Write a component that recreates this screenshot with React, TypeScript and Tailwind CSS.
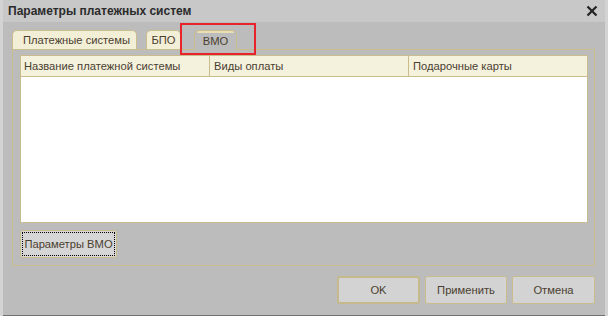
import React from "react";

const F = { fontFamily: '"Liberation Sans", Arial, sans-serif' };

export default function App() {
  return (
    <div
      className="relative w-[608px] h-[316px] bg-[#bcbcbc] border-l-[3px] border-r-[3px] border-[#d3d3d3] flex flex-col text-[11.2px] text-[#4a4030] whitespace-nowrap overflow-hidden"
      style={F}
    >
      {/* title bar */}
      <div className="h-[22px] bg-[#c8c8c8] flex items-center justify-between pl-[5px] pr-[5px] shrink-0">
        <span className="font-bold text-[12px] text-[#2b2b2b]">Параметры платежных систем</span>
        <svg width="12" height="12" viewBox="0 0 12 12" className="mr-[2px]">
          <path d="M1.5 1.5 L10.5 10.5 M10.5 1.5 L1.5 10.5" stroke="#222" strokeWidth="2.2" />
        </svg>
      </div>

      {/* tabs */}
      <div className="flex items-end h-[19px] mt-[8px] ml-[9px] shrink-0">
        <div className="h-[19px] w-[125px] bg-[#f3efd7] border border-b-0 border-[#c9bd8e] rounded-t-[5px] flex items-center pl-[10px] pt-[1px] text-[#4a4030]">
          Платежные системы
        </div>
        <div className="h-[19px] w-[35px] ml-[9px] bg-[#f3efd7] border border-b-0 border-[#c9bd8e] rounded-t-[5px] flex items-center justify-center pt-[1px]">
          БПО
        </div>
        <div className="relative h-[20px] w-[43px] ml-[13px] -mb-px z-10 bg-[#bcbcbc] border border-b-0 border-[#c9bd8e] rounded-t-[5px] flex items-center justify-center pt-[1px]">
          <div className="absolute left-[2px] right-[2px] top-0 h-[2px] bg-[#e9dfb2] rounded-t-[4px]" />
          ВМО
        </div>
      </div>

      {/* tab panel */}
      <div className="ml-[9px] mr-[10px] h-[217px] border border-[#c9bd8e] flex flex-col pl-[7px] pr-[6px] pt-[5px] shrink-0">
        <div className="h-[168px] bg-white border border-[#c9bd8e] flex flex-col">
          <div className="h-[21px] bg-[#f4f1dd] border-b border-[#c9bd8e] flex items-center text-[#4a4030]">
            <div className="w-[189px] h-full border-r border-[#c9bd8e] flex items-center pl-[3px]">Название платежной системы</div>
            <div className="w-[199px] h-full border-r border-[#c9bd8e] flex items-center pl-[4px]">Виды оплаты</div>
            <div className="flex-1 h-full flex items-center pl-[4px]">Подарочные карты</div>
          </div>
        </div>
        <div className="mt-[7px] w-[97px] h-[28px] bg-[#d6d6d6] border border-[#c9bd8e] rounded-[2px] p-[1px]">
          <div className="w-full h-full border border-dotted border-black flex items-center justify-center">
            Параметры ВМО
          </div>
        </div>
      </div>

      {/* bottom buttons */}
      <div className="flex justify-end gap-[5px] mr-[10px] mt-[10px] shrink-0">
        <div className="w-[83px] h-[28px] bg-[#d3d3d3] border-2 border-[#c6b98c] rounded-[3px] flex items-center justify-center">OK</div>
        <div className="w-[82px] h-[28px] bg-[#d3d3d3] border border-[#c9bd8e] rounded-[2px] flex items-center justify-center">Применить</div>
        <div className="w-[83px] h-[28px] bg-[#d3d3d3] border border-[#c9bd8e] rounded-[2px] flex items-center justify-center">Отмена</div>
      </div>

      <div className="absolute left-[-3px] right-[-3px] bottom-0 h-px bg-[#707070]" />

      {/* red highlight */}
      <div className="absolute left-[177px] top-[23px] w-[76px] h-[32px] border-2 border-[#e8232b] z-20" />
    </div>
  );
}
